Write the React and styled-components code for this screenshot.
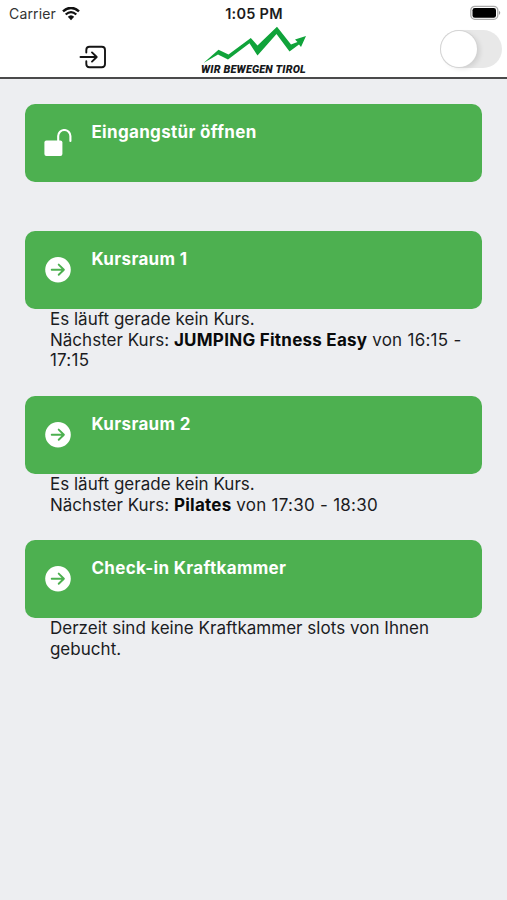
import React from "react";
import styled, { createGlobalStyle } from "styled-components";

const GlobalStyle = createGlobalStyle`
  * { box-sizing: border-box; }
  html, body { margin: 0; background: #edeef1; }
  body { font-family: Inter, "Liberation Sans", sans-serif; color: #1b1c1f; }
`;

const Screen = styled.div`
  width: 100%;
  max-width: 507px;
  height: 900px;
  overflow: hidden;
  background: #edeef1;
`;

const Header = styled.header`
  height: 79px;
  background: #fff;
  border-bottom: 2px solid #4a4a4b;
`;

const StatusBar = styled.div`
  display: grid;
  grid-template-columns: 1fr auto 1fr;
  align-items: center;
  height: 26px;
  padding: 2px 6px 0 9px;
  font-size: 14px;
  line-height: 24px;
`;

const Carrier = styled.div`
  display: flex;
  align-items: center;
  gap: 6px;
  color: #333;
  letter-spacing: 0.15px;
`;

const Clock = styled.div`
  font-size: 14.5px;
  font-weight: 600;
  color: #1c1c1c;
  letter-spacing: 0.25px;
  margin-right: 2px;
`;

const BatteryIcon = styled.svg`
  display: block;
  justify-self: end;
  margin-top: -3px;
`;

const NavBar = styled.nav`
  display: grid;
  grid-template-columns: 1fr 108px 1fr;
  height: 51px;
  padding-right: 5px;
`;

const LoginButton = styled.button`
  display: block;
  justify-self: start;
  align-self: start;
  margin: 19px 0 0 79px;
  padding: 0;
  border: 0;
  background: none;
  color: #151515;
`;

const Icon = styled.svg`
  display: block;
`;

const Brand = styled.div`
  display: flex;
  flex-direction: column;
  align-items: center;
  margin-left: 5px;
`;

const BrandName = styled.span`
  font-family: Roboto, sans-serif;
  font-size: 10.8px;
  font-style: italic;
  font-weight: 900;
  line-height: 12px;
  letter-spacing: 0.2px;
  white-space: nowrap;
  color: #17191b;
`;

const Toggle = styled.div`
  justify-self: end;
  width: 62px;
  height: 38px;
  margin-top: 4px;
  border-radius: 19px;
  background: #e8e8e8;
`;

const Knob = styled.div`
  width: 36px;
  height: 36px;
  margin: 1px;
  border-radius: 50%;
  background: #fff;
  box-shadow: 0 0 0 1px #d4d4d4, 3px 2px 5px rgba(0, 0, 0, 0.1);
`;

const Content = styled.main`
  display: flex;
  flex-direction: column;
  padding: 24.6px 24.5px 0 25.4px;
`;

const Section = styled.section`
  height: ${(p) => p.$height}px;
`;

const ActionCard = styled.button`
  display: flex;
  width: 457px;
  height: 78px;
  padding: 0 0 0 18px;
  border: 0;
  border-radius: 10px;
  background: #4db050;
  color: #fff;
  text-align: left;
  font-family: inherit;
`;

const CardIcon = styled.span`
  width: 48px;
  padding-top: 25px;
`;

const CardTitle = styled.span`
  padding-top: 17px;
  font-size: 17px;
  font-weight: 700;
  line-height: 22px;
  letter-spacing: 0.33px;
`;

const Details = styled.p`
  margin: 0;
  padding: 0 16px 0 24.5px;
  font-size: 17px;
  line-height: 20.8px;
  letter-spacing: 0.03px;
`;

const CourseName = styled.strong`
  font-weight: 700;
  letter-spacing: 0.26px;
  color: #090a0b;
`;

const CourseTime = styled.span`
  letter-spacing: 0.26px;
`;

const WifiIcon = () => (
  <Icon width="18" height="14" viewBox="0 0.5 18 14" fill="none">
    <path d="M1 4.9Q9-2.1 17 4.9" stroke="#111" strokeWidth="2.5" />
    <path d="M3.7 8Q9 3.3 14.3 8" stroke="#111" strokeWidth="2.3" />
    <path d="M5.8 10.3Q9 7.3 12.2 10.3L9 13.7Z" fill="#111" />
  </Icon>
);

const LoginIcon = () => (
  <Icon width="28" height="24" viewBox="0 -0.4 28 24" fill="none" stroke="currentColor" strokeWidth="1.9" strokeLinecap="round" strokeLinejoin="round">
    <path d="M7.3 7.2V4.5Q7.3 1.3 10.5 1.3H22.8Q26 1.3 26 4.5V18.6Q26 21.8 22.8 21.8H10.5Q7.3 21.8 7.3 18.6V15.9" />
    <path d="M1.5 11.6H17.5M13 7L17.7 11.6L13 16.2" />
  </Icon>
);

const MountainLogo = () => (
  <Icon width="106" height="38" viewBox="201 25 106 38">
    <path d="M203.5 62L218.5 48.7L228.5 53.5L250.8 37L257.5 44.5L277 25.8L291 43.5L297.5 41L295 38.5L306 35L301 46L299 43.5L289.5 50.5L276.5 33L257.5 54.5L249.5 42.3L228 58.5L218 53.5Z" fill="#10a33a" />
  </Icon>
);

const UnlockIcon = () => (
  <Icon width="30" height="30" viewBox="-0.4 0 30 30">
    <rect x="1" y="11.5" width="18" height="15.5" rx="2" fill="currentColor" />
    <path d="M14.8 13V7.1A6.1 6.1 0 0 1 27 7.1V12" fill="none" stroke="currentColor" strokeWidth="2.1" strokeLinecap="round" />
  </Icon>
);

const ArrowIcon = () => (
  <Icon width="30" height="30" viewBox="-0.5 0 30 30">
    <circle cx="14.5" cy="13.7" r="12.8" fill="currentColor" />
    <path d="M8.2 13.7H20M15.2 8.6L20.4 13.7L15.2 18.8" fill="none" stroke="#4db050" strokeWidth="1.9" strokeLinecap="round" strokeLinejoin="round" />
  </Icon>
);

function Room({ title, height, icon, children }) {
  return (
    <Section $height={height}>
      <ActionCard>
        <CardIcon>{icon || <ArrowIcon />}</CardIcon>
        <CardTitle>{title}</CardTitle>
      </ActionCard>
      {children && <Details>{children}</Details>}
    </Section>
  );
}

export default function App() {
  return (
    <>
      <GlobalStyle />
      <Screen>
        <Header>
          <StatusBar>
            <Carrier>Carrier <WifiIcon /></Carrier>
            <Clock>1:05 PM</Clock>
            <BatteryIcon width="31" height="16" viewBox="0 0 31 16">
              <rect x="0.8" y="1.3" width="27" height="13" rx="4" fill="#fff" stroke="#aaa" strokeWidth="1.3" />
              <rect x="2.5" y="3" width="23.5" height="9.8" rx="2.3" fill="#000" />
              <path d="M29 5.7Q31.5 7.8 29 10Z" fill="#999" />
            </BatteryIcon>
          </StatusBar>
          <NavBar>
            <LoginButton aria-label="Anmelden"><LoginIcon /></LoginButton>
            <Brand>
              <MountainLogo />
              <BrandName>WIR BEWEGEN TIROL</BrandName>
            </Brand>
            <Toggle role="switch" aria-checked="false"><Knob /></Toggle>
          </NavBar>
        </Header>
        <Content>
          <Room title="Eingangstür öffnen" height={127.2} icon={<UnlockIcon />} />
          <Room title="Kursraum 1" height={165}>
            Es läuft gerade kein Kurs.<br />
            Nächster Kurs: <CourseName>JUMPING Fitness Easy</CourseName> <CourseTime>von 16:15 - 17:15</CourseTime>
          </Room>
          <Room title="Kursraum 2" height={144}>
            Es läuft gerade kein Kurs.<br />
            Nächster Kurs: <CourseName>Pilates</CourseName> <CourseTime>von 17:30 - 18:30</CourseTime>
          </Room>
          <Room title="Check-in Kraftkammer" height={120}>
            Derzeit sind keine Kraftkammer slots von Ihnen gebucht.
          </Room>
        </Content>
      </Screen>
    </>
  );
}
